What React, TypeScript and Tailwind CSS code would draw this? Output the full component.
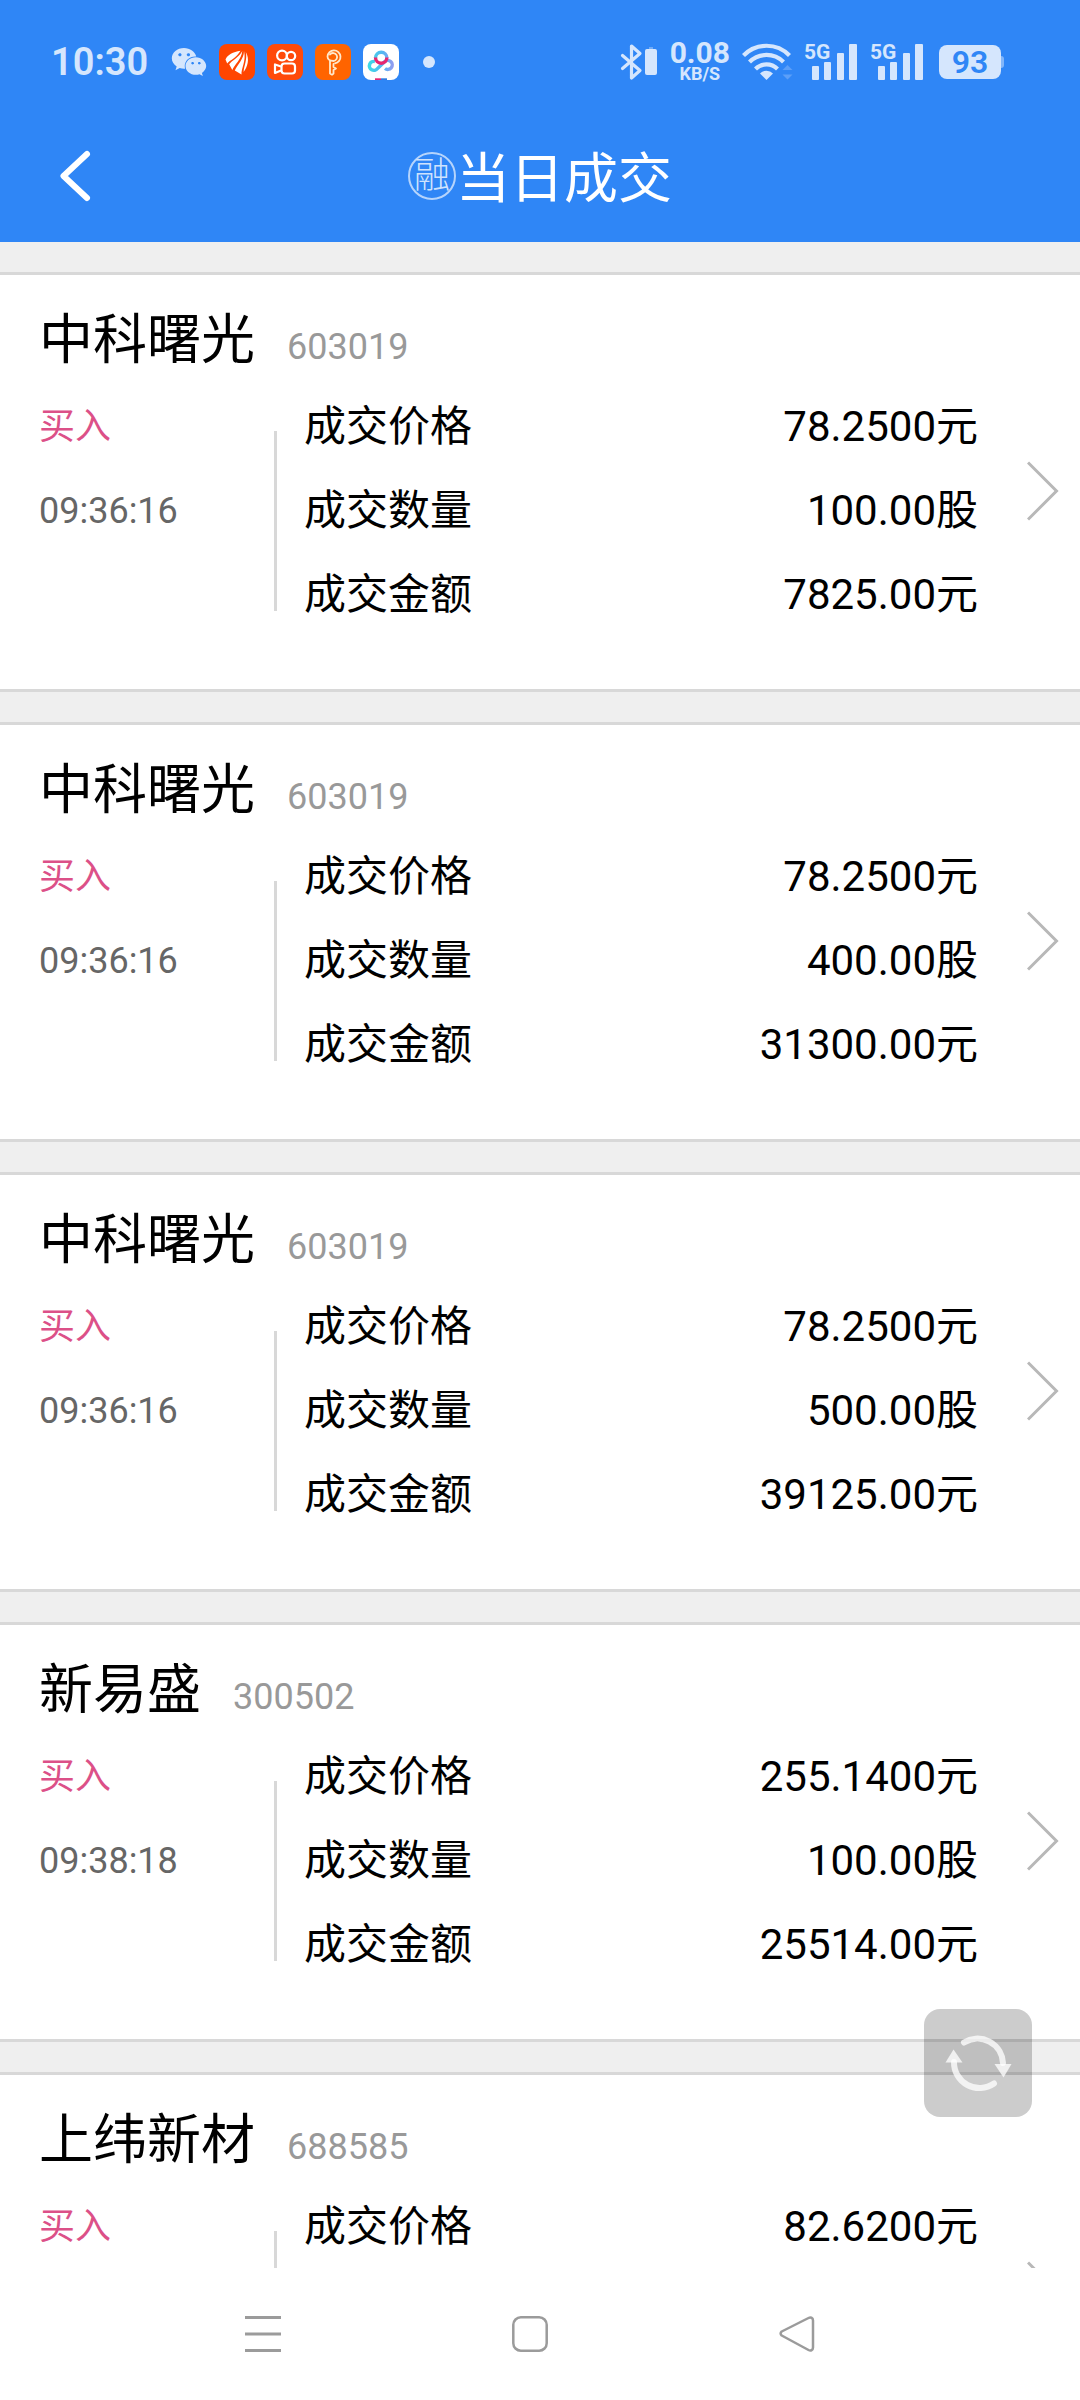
import { FaWeixin } from "react-icons/fa";

type Trade = {
  id: number;
  name: string;
  code: string;
  side: string;
  price: string;
  time?: string;
  quantity?: string;
  amount?: string;
};

const trades: Trade[] = [
  { id: 1, name: "中科曙光", code: "603019", side: "买入", time: "09:36:16", price: "78.2500元", quantity: "100.00股", amount: "7825.00元" },
  { id: 2, name: "中科曙光", code: "603019", side: "买入", time: "09:36:16", price: "78.2500元", quantity: "400.00股", amount: "31300.00元" },
  { id: 3, name: "中科曙光", code: "603019", side: "买入", time: "09:36:16", price: "78.2500元", quantity: "500.00股", amount: "39125.00元" },
  { id: 4, name: "新易盛", code: "300502", side: "买入", time: "09:38:18", price: "255.1400元", quantity: "100.00股", amount: "25514.00元" },
  { id: 5, name: "上纬新材", code: "688585", side: "买入", price: "82.6200元" },
];

function NotificationIcons() {
  return (
    <div className="flex items-center gap-3">
      <FaWeixin className="w-9 h-8" />

      <svg viewBox="0 0 36 36" className="size-9">
        <rect width="36" height="36" rx="8" fill="#ff4500" />
        <g fill="#fff">
          <path d="M21.5 6.8C14 8 8.500 11 6.500 15.500L8.200 19.500C11 16 17 14.500 21.500 6.800Z" />
          <path d="M23.300 7C20 13.500 12.500 16.500 10.200 20.300L13.300 26C15.500 20.500 22.500 15.500 23.300 7Z" />
          <path d="M25 7C25 15 18.500 20.500 15.800 26.500L22.500 30.500C22 24.500 27.500 17 25 7Z" />
          <path d="M26.800 8C28.500 15 25 21.500 24.600 28C28.500 23 31 15 26.800 8Z" />
        </g>
      </svg>

      <svg viewBox="0 0 36 36" className="size-9">
        <rect width="36" height="36" rx="8" fill="#ff4a0a" />
        <g fill="none" stroke="#fff" strokeWidth="2.200" strokeLinejoin="round">
          <circle cx="15" cy="11.500" r="4.900" />
          <circle cx="24" cy="12" r="4.200" />
          <rect x="14.500" y="19.500" width="13.500" height="10" rx="3" />
          <path d="M14 22.500 8 20.500v8.500l6-2.500" />
        </g>
      </svg>

      <svg viewBox="0 0 36 36" className="size-9">
        <rect width="36" height="36" rx="8" fill="#ff6400" />
        <g fill="none" stroke="#ffe9cc" strokeWidth="1.800" strokeLinecap="round" strokeLinejoin="round">
          <path d="M15 10.500a4 4 0 1 1 3.500 6.500c-3.500 0-6-2-6-4.500a6.500 6.500 0 1 1 7.500 6.800" />
          <path d="M15 17v12.500l2 1.200 1.500-1.200v-3.500l2.500-1.500-2.500-1.500v-3" />
        </g>
      </svg>

      <svg viewBox="0 0 36 36" className="size-9">
        <defs>
          <linearGradient id="cloud" x1="0" x2="1" y1="0" y2="0">
            <stop offset="0" stopColor="#3fd8e6" />
            <stop offset="0.600" stopColor="#55b4f2" />
            <stop offset="1" stopColor="#8f9df0" />
          </linearGradient>
        </defs>
        <rect width="36" height="36" rx="8" fill="#fff" />
        <path d="M12.500 14a5.700 5.700 0 0 1 11.400 0M12 17.500A4.500 4.500 0 1 0 14.500 24.500l7-6.700A4.500 4.500 0 1 1 22 24.500" fill="none" stroke="url(#cloud)" strokeWidth="3.400" />
        <path d="M12.500 13.500a5.700 5.700 0 0 0 11.400 0" fill="none" stroke="#e8256f" strokeWidth="3.400" />
        <path d="M12 34.300h6V36h-6z" fill="#e8256f" />
        <path d="M18 34.300h6V36h-6z" fill="#2f7de0" />
      </svg>

      <span className="flex size-9 items-center justify-center">
        <span className="size-3 rounded-full bg-[#d5e6fd]" />
      </span>
    </div>
  );
}

function Signal() {
  return (
    <svg viewBox="0 -4 54 48" className="h-12 w-[54px]" fill="currentColor">
      <text x="-1" y="17" fontSize="21" fontWeight="700">
        5G
      </text>
      <rect x="7" y="24" width="7" height="14" rx="1" />
      <rect x="19" y="20" width="7" height="18" rx="1" />
      <rect x="32" y="11" width="7" height="27" rx="1" />
      <rect x="44" y="2" width="8" height="36" rx="1" />
    </svg>
  );
}

function StatusBar() {
  return (
    <div className="flex h-[124px] items-center justify-between pl-[51px] pr-[76px] text-[#d5e6fd]">
      <div className="flex items-center gap-[23px]">
        <span className="text-[38px] leading-10 font-semibold">10:30</span>
        <NotificationIcons />
      </div>

      <div className="flex items-center gap-3">
        <svg viewBox="0 0 38 38" className="size-[38px]" fill="none">
          <path d="M2.500 12.500 20 27.500 11.500 35V3L20 10.500 2.500 25.500" stroke="currentColor" strokeWidth="3.200" strokeLinejoin="round" strokeLinecap="round" />
          <path d="M29 4h4v2h2.500v2h-9V6H29z" fill="currentColor" opacity="0.400" />
          <rect x="25" y="6" width="12" height="26" rx="2" fill="currentColor" />
        </svg>

        <div className="flex flex-col items-center font-bold">
          <span className="text-[30px] leading-6">0.08</span>
          <span className="text-[18px] leading-[18px]">KB/S</span>
        </div>

        <svg viewBox="0 0 51 38" className="h-[38px] w-[51px]" fill="none">
          <g stroke="currentColor" strokeWidth="4.200">
            <path d="M1.500 12.500a32 32 0 0 1 46 0" />
            <path d="M7.500 19a24 24 0 0 1 34 0" />
            <path d="M13.500 26a15.500 15.500 0 0 1 22 0" />
          </g>
          <path d="M24.500 37 18 30.500a9 9 0 0 1 13 0z" fill="currentColor" />
          <path d="m45.500 22 5 5h-10zM45.500 36.500l5-5h-10z" fill="#5c9ff8" />
        </svg>

        <Signal />
        <Signal />

        <div className="flex items-center pl-[2px]">
          <span className="flex h-[34px] w-[62px] items-center justify-center rounded-lg bg-[#d5e6fd] text-[32px] leading-8 font-semibold text-[#2f86f6]">
            93
          </span>
          <span className="h-3 w-[3px] rounded-r bg-[#82b6fa]" />
        </div>
      </div>
    </div>
  );
}

function Header() {
  return (
    <header className="shrink-0 bg-[#2f86f6]">
      <StatusBar />
      <div className="grid h-[118px] grid-cols-[1fr_auto_1fr] items-start pt-4">
        <button type="button" aria-label="返回" className="flex h-[72px] w-[150px] items-center pl-[57px] text-white">
          <svg viewBox="0 0 36 56" className="h-14 w-9" fill="none" stroke="currentColor" strokeWidth="6" strokeLinecap="round" strokeLinejoin="round">
            <path d="M30 6 6.500 28 30 50" />
          </svg>
        </button>
        <h1 className="flex items-start text-[54px] leading-[80px] font-normal text-white">
          <span className="mt-3 flex size-12 items-center justify-center rounded-full border-2 border-[#b5d4fc] text-[36px] leading-9 font-light text-[#cfe3fd]">
            融
          </span>
          当日成交
        </h1>
      </div>
    </header>
  );
}

function TradeCard({ trade }: { trade: Trade }) {
  const rows = [
    { label: "成交价格", value: trade.price },
    { label: "成交数量", value: trade.quantity },
    { label: "成交金额", value: trade.amount },
  ].filter((row) => row.value);

  return (
    <a href={`#trade-${trade.id}`} className="flex items-center border-y-3 border-[#d8d8d8] bg-white pr-[21px] pl-[39px]">
      <div className="flex-1 pt-[30px] pb-[52px]">
        <h2 className="mb-2 flex items-baseline gap-8 text-[54px] leading-[72px] font-normal text-black">
          {trade.name}
          <span className="text-4xl text-[#999]">{trade.code}</span>
        </h2>
        <div className="flex min-h-[252px]">
          <div className="w-[235px] text-[36px] leading-[84px]">
            <p className="text-[#dc5088]">{trade.side}</p>
            {trade.time && <p className="text-[#666]">{trade.time}</p>}
          </div>
          <div className="mt-[46px] mb-[26px] w-[3px] bg-[#d8d8d8]" />
          <dl className="ml-[27px] flex-1 text-[42px] leading-[84px] text-black">
            {rows.map((row) => (
              <div key={row.label} className="flex justify-between">
                <dt>{row.label}</dt>
                <dd>{row.value}</dd>
              </div>
            ))}
          </dl>
        </div>
      </div>
      <svg viewBox="0 0 32 60" className="mt-[18px] ml-[49px] h-[60px] w-8 text-[#b8b8b8]" fill="none" stroke="currentColor" strokeWidth="3">
        <path d="M1 1.500 29.500 30 1 58.500" />
      </svg>
    </a>
  );
}

function NavBar() {
  return (
    <nav className="flex h-[132px] shrink-0 items-center justify-center gap-[231px] bg-white pr-5 text-[#9b9b9b]">
      <button type="button" aria-label="菜单">
        <svg viewBox="0 0 36 36" className="size-9" stroke="currentColor" strokeWidth="3">
          <path d="M0 1.500h36M0 18h36M0 34.500h36" />
        </svg>
      </button>
      <button type="button" aria-label="主页">
        <svg viewBox="0 0 36 36" className="size-9" fill="none" stroke="currentColor" strokeWidth="2.500">
          <rect x="1.300" y="1.300" width="33.400" height="33.400" rx="7.500" />
        </svg>
      </button>
      <button type="button" aria-label="后退">
        <svg viewBox="0 0 36 36" className="size-9" fill="none" stroke="currentColor" strokeWidth="2.500" strokeLinejoin="round">
          <path d="M2.700 15.500 29.500 2C31.500 1 34 1.500 34 4.500V31.500C34 34.500 31.500 35 29.500 34L2.700 19.500Q.5 17.500 2.700 15.500Z" />
        </svg>
      </button>
    </nav>
  );
}

export default function App() {
  return (
    <div className="flex h-screen flex-col bg-white font-['Roboto','Noto_Sans_CJK_SC',sans-serif]">
      <Header />
      <div className="relative min-h-0 flex-1">
        <main className="flex h-full flex-col gap-[30px] overflow-y-auto bg-[#efefef] pt-[30px] [scrollbar-width:none]">
          {trades.map((trade) => (
            <TradeCard key={trade.id} trade={trade} />
          ))}
        </main>
        <button
          type="button"
          aria-label="刷新"
          className="absolute right-12 bottom-[151px] flex size-[108px] items-center justify-center rounded-2xl bg-black/20 text-white/75"
        >
          <svg viewBox="0 0 68 60" className="h-[60px] w-[68px]" fill="none">
            <g stroke="currentColor" strokeWidth="6" strokeLinecap="round">
              <path d="M20 9.500A25.500 25.500 0 0 1 59 30" />
              <path d="M50 50.500A25.500 25.500 0 0 1 10 29" />
            </g>
            <path d="M50.500 31h17L59.500 44.500z" fill="currentColor" />
            <path d="M1.500 29.500h17L9.500 16.500z" fill="currentColor" />
          </svg>
        </button>
      </div>
      <NavBar />
    </div>
  );
}
